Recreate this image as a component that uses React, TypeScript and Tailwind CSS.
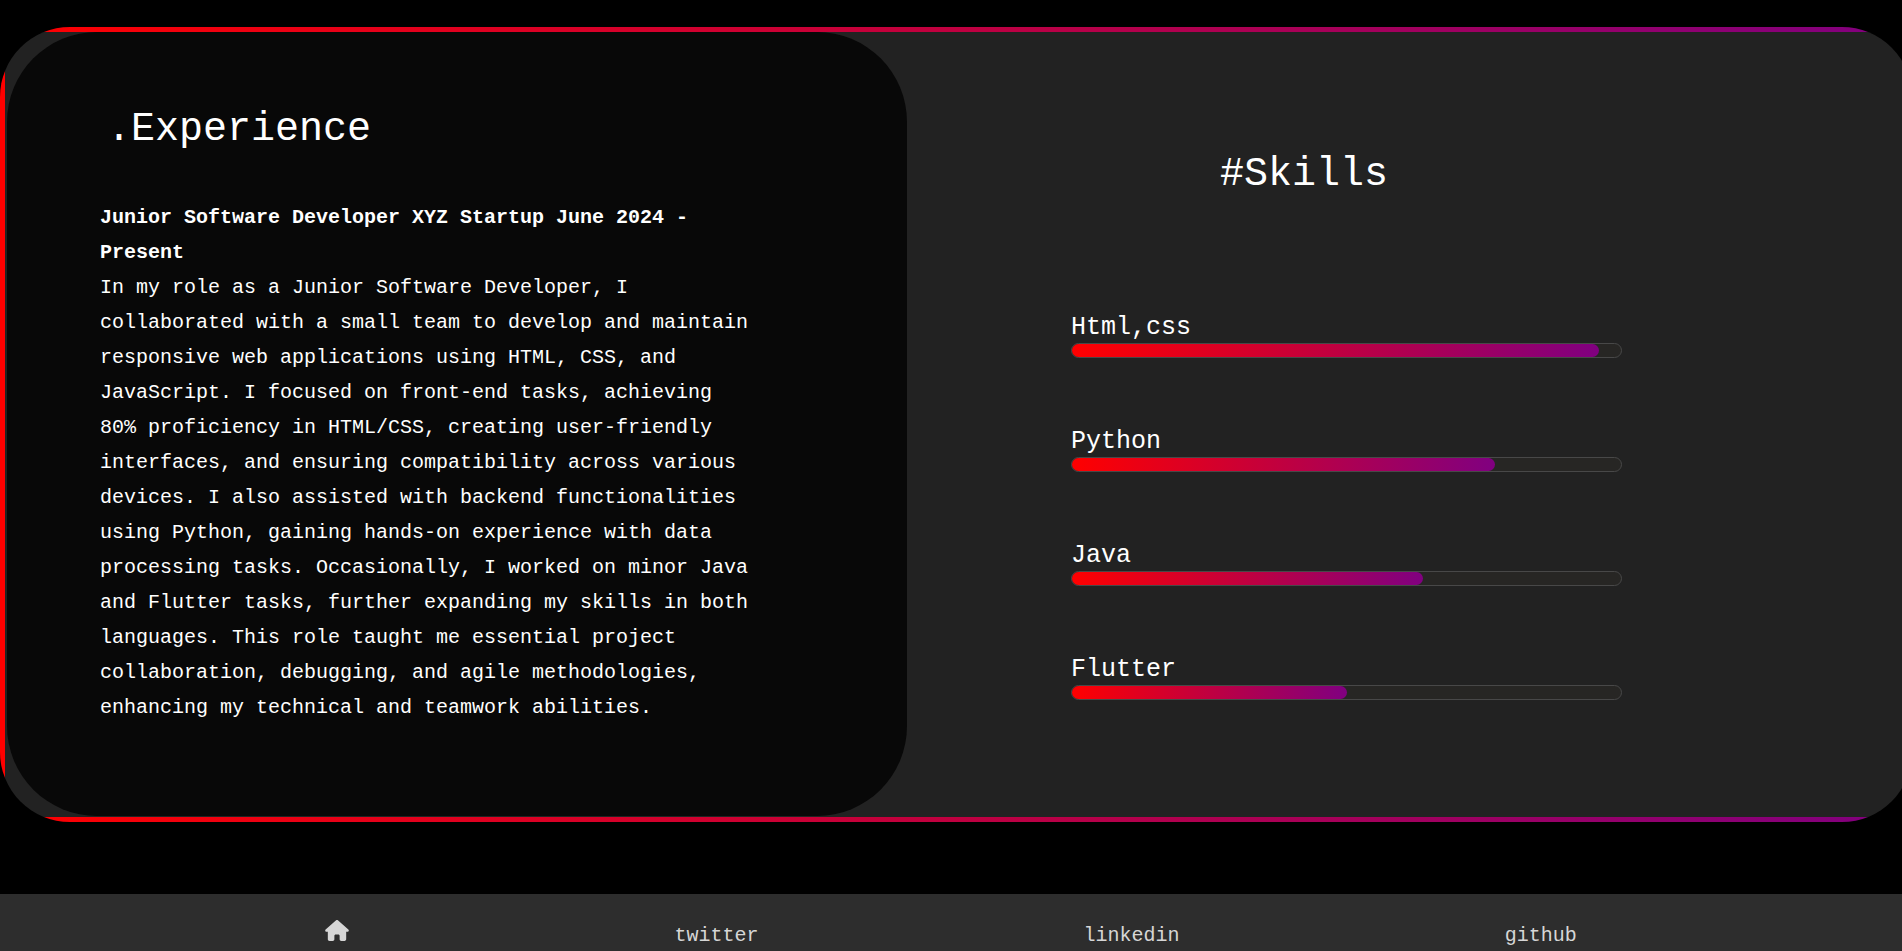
import { FaHouse } from "react-icons/fa6";

const skills = [
  { id: "html", name: "Html,css", level: 96 },
  { id: "python", name: "Python", level: 77 },
  { id: "java", name: "Java", level: 64 },
  { id: "flutter", name: "Flutter", level: 50 },
];

const links = ["twitter", "linkedin", "github"];

function SkillBar({ id, name, level }: { id: string; name: string; level: number }) {
  return (
    <li>
      <span id={id} className="block text-[25px] leading-[30px]">
        {name}
      </span>
      <div
        role="progressbar"
        aria-labelledby={id}
        aria-valuenow={level}
        aria-valuemin={0}
        aria-valuemax={100}
        className="h-[15px] rounded-lg border border-[#484848] bg-[#272624]"
      >
        <div
          className="h-full rounded-lg bg-[linear-gradient(to_right,red,purple)]"
          style={{ width: `${level}%` }}
        />
      </div>
    </li>
  );
}

function Experience() {
  return (
    <section className="mb-px rounded-[90px] bg-[#080808] pt-[74px] pr-[90px] pb-[91px] pl-[93px]">
      <h2 className="pl-[7px] text-[40px] leading-[48px]">.Experience</h2>
      <p className="mt-[46px] max-w-[655px] text-xl leading-[35px]">
        <strong className="block font-bold">
          Junior Software Developer XYZ Startup June 2024 - Present
        </strong>
        In my role as a Junior Software Developer, I collaborated with a small team to develop and
        maintain responsive web applications using HTML, CSS, and JavaScript. I focused on front-end
        tasks, achieving 80% proficiency in HTML/CSS, creating user-friendly interfaces, and ensuring
        compatibility across various devices. I also assisted with backend functionalities using
        Python, gaining hands-on experience with data processing tasks. Occasionally, I worked on
        minor Java and Flutter tasks, further expanding my skills in both languages. This role taught
        me essential project collaboration, debugging, and agile methodologies, enhancing my
        technical and teamwork abilities.
      </p>
    </section>
  );
}

function Skills() {
  return (
    <section className="pt-[119px] pr-[285px] pl-[164px]">
      <h2 className="pl-[149px] text-[40px] leading-[48px]">#Skills</h2>
      <ul className="mt-[114px] flex flex-col gap-[69px]">
        {skills.map((skill) => (
          <SkillBar key={skill.id} {...skill} />
        ))}
      </ul>
    </section>
  );
}

export default function App() {
  return (
    <div className="flex min-h-screen flex-col overflow-x-hidden bg-black font-['Liberation_Mono',monospace] text-white">
      {/* Straight gradient edges, cut off by the rounded corners */}
      <main className="mt-[27px] mb-[72px] box-content w-full shrink-0 rounded-[70px] bg-[#222] bg-[image:linear-gradient(to_right,red,purple),linear-gradient(to_right,red,purple),linear-gradient(red,red),linear-gradient(purple,purple)] [background-position:top,bottom,left,right] bg-no-repeat [background-size:100%_5px,100%_5px,5px_100%,5px_100%] p-[5px]">
        <div className="grid grid-cols-[9fr_10fr] pl-[2px]">
          <Experience />
          <Skills />
        </div>
      </main>
      <footer className="flex flex-1 items-baseline justify-evenly bg-[#2d2d2d] pt-[26px] text-xl leading-7 text-[#d6d6d6]">
        <a href="#home" aria-label="Home" className="flex">
          <FaHouse className="h-[21px] w-6" />
        </a>
        {links.map((link) => (
          <a key={link} href={`#${link}`}>
            {link}
          </a>
        ))}
      </footer>
    </div>
  );
}
